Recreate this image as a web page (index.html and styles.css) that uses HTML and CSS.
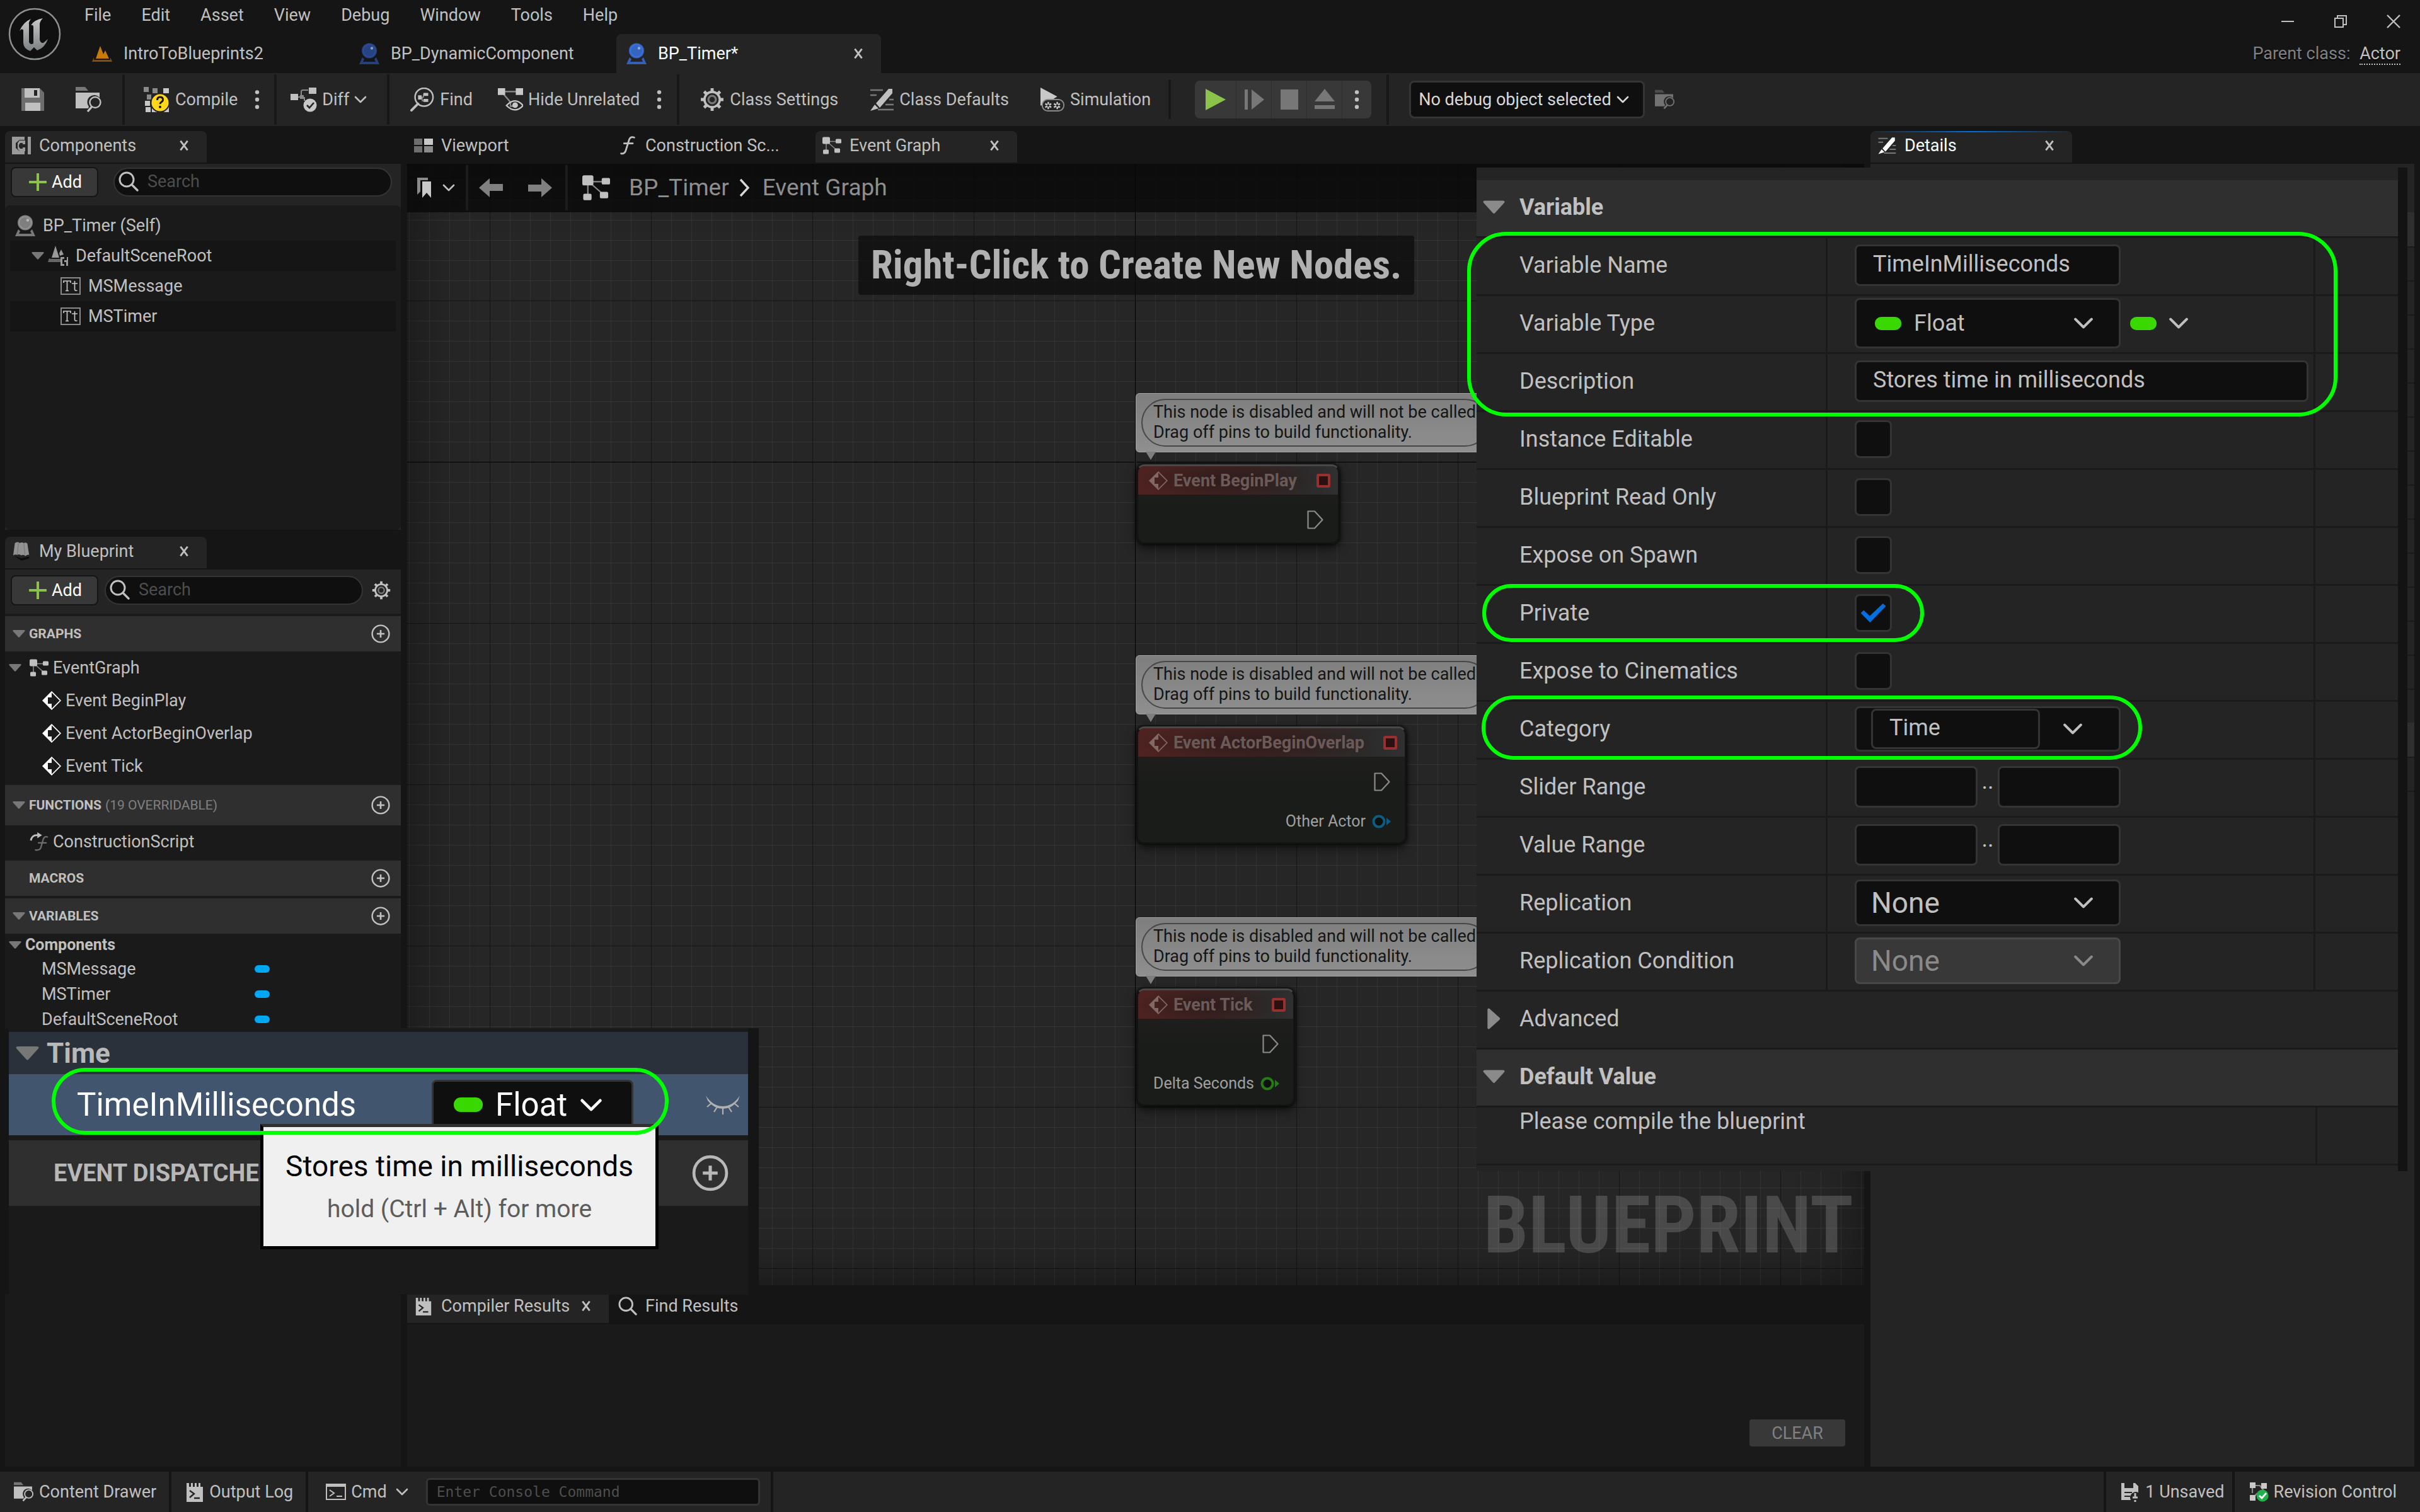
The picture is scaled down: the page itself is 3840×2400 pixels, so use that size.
FILE: index.html
```html
<!DOCTYPE html>
<html lang="en">
<head>
<meta charset="utf-8">
<title>BP_Timer - Blueprint Editor</title>
<link rel="stylesheet" href="styles.css">
</head>
<body>
<svg class="defs" aria-hidden="true">
  <defs>
    <linearGradient id="metal" x1="0" y1="0" x2="0" y2="1"><stop offset="0" stop-color="#c8c8c8"/><stop offset="1" stop-color="#7c8082"/></linearGradient>
    <symbol id="i-close" viewBox="0 0 16 16"><path d="M3 1.5l10 13M13 1.5l-10 13" stroke="currentColor" stroke-width="2.6" fill="none"/></symbol>
    <symbol id="i-chev" viewBox="0 0 20 12"><path d="M2 2l8 8 8-8" stroke="currentColor" stroke-width="2.6" fill="none" stroke-linecap="round" stroke-linejoin="round"/></symbol>
    <symbol id="i-tri" viewBox="0 0 20 12"><path d="M1.5 0h17q2 .5 .8 2L11 11.2q-1 1-2 0L.7 2Q-.5.5 1.5 0z" fill="currentColor"/></symbol>
    <symbol id="i-tri-r" viewBox="0 0 12 20"><path d="M0 1.5v17q.5 2 2 .8L11.2 11q1-1 0-2L2 .7Q.5-.5 0 1.5z" fill="currentColor"/></symbol>
    <symbol id="i-dots" viewBox="0 0 8 32"><circle cx="4" cy="5" r="3" fill="currentColor"/><circle cx="4" cy="16" r="3" fill="currentColor"/><circle cx="4" cy="27" r="3" fill="currentColor"/></symbol>
    <symbol id="i-search" viewBox="0 0 32 32"><circle cx="13" cy="13" r="11" stroke="currentColor" stroke-width="3" fill="none"/><path d="M21 21l9 9" stroke="currentColor" stroke-width="3.4" stroke-linecap="round"/></symbol>
    <symbol id="i-plus" viewBox="0 0 28 28"><path d="M14 1v26M1 14h26" stroke="#8bc34a" stroke-width="4" stroke-linecap="round"/></symbol>
    <symbol id="i-circplus" viewBox="0 0 32 32"><circle cx="16" cy="16" r="14.3" stroke="currentColor" stroke-width="2.6" fill="none"/><path d="M16 9.5v13M9.5 16h13" stroke="currentColor" stroke-width="2.8"/></symbol>
    <symbol id="i-level" viewBox="0 0 32 26"><path d="M3 19L0 26h32l-3-7v4H3z" fill="#80500a"/><path d="M6 21L13 1l5 13 3-6 6 13z" fill="#c77a06"/></symbol>
    <symbol id="i-ball" viewBox="0 0 32 34"><path d="M5 23L0 34h32l-5-11-3 3 2 4H6l2-4z" fill="currentColor" opacity=".75"/><circle cx="16" cy="12.5" r="12" fill="currentColor" opacity=".8"/><circle cx="16" cy="12.5" r="9.6" fill="none" stroke="currentColor" stroke-width="1.2"/><circle cx="20" cy="8.500" r="2.200" fill="#fff" opacity=".45"/></symbol>
    <symbol id="i-save" viewBox="0 0 36 36"><path d="M0 0h29l7 7v29H0z" fill="#6e6e6e"/><path d="M5 0h24v15H5zM6 23h24v13H6z" fill="#c0c0c0"/><path d="M20 3h5v9h-5z" fill="#242424"/></symbol>
    <symbol id="i-browse" viewBox="0 0 42 40"><path d="M0 0h15l5 6H0z" fill="#777"/><path d="M0 9h38v8a11 11 0 0 0-17 14l-1 3H0z" fill="currentColor"/><circle cx="31" cy="24.500" r="8.500" stroke="currentColor" stroke-width="2.400" fill="none"/><path d="M26 31l-7 8" stroke="currentColor" stroke-width="3.400"/></symbol>
    <symbol id="i-compile" viewBox="0 0 42 40"><path d="M0 0h8v8H0zM14 2h8v8h-8z" fill="#8a8a8a"/><path d="M5 12h7v8H5z" fill="#8a8a8a"/><path d="M31 2h9v8h-9zM2 22h8v8H2zM3 32h8v8H3zM13 32h8v8h-8zM32 32h8v8h-8z" fill="#c8c8c8"/><circle cx="26" cy="25" r="15.500" fill="#242424"/><circle cx="26" cy="25" r="13.500" fill="#ffd81a"/><path d="M21.500 21q0-5 4.500-5t4.500 4.200q0 2.300-2.500 3.800-2 1.200-2 3.200" stroke="#1a1500" stroke-width="3" fill="none"/><circle cx="26" cy="31.700" r="2" fill="#1a1500"/></symbol>
    <symbol id="i-diff" viewBox="0 0 42 40"><path d="M8 16h9V7q0-2 3-2h8M22 16v6" stroke="#8a8a8a" stroke-width="2" fill="none"/><path d="M0 11h12v10H0zM29 1h12v10H29z" fill="#c0c0c0"/><path d="M15 13h6v6h-6z" fill="#8a8a8a"/><circle cx="31" cy="29" r="10.500" fill="#c8c8c8"/><path d="M26 29l4 4 7-8" stroke="#242424" stroke-width="2.600" fill="none"/></symbol>
    <symbol id="i-find" viewBox="0 0 40 40"><circle cx="23" cy="16" r="15" stroke="currentColor" stroke-width="2.600" fill="none"/><path d="M13 27L2 38" stroke="currentColor" stroke-width="4" stroke-linecap="round"/><path d="M22 9h8v5h-8zM22 19h8v5h-8zM13 13h6v7h-6z" fill="currentColor"/><path d="M19 16h3v-5M20 16v6h3" stroke="#999" stroke-width="1.600" fill="none"/></symbol>
    <symbol id="i-hide" viewBox="0 0 38 36"><path d="M6 6h26M7 8l12 14v6h4" stroke="#8a8a8a" stroke-width="2.200" fill="none"/><path d="M0 1h11v10H0zM27 1h11v10H27z" fill="#c8c8c8"/><path d="M13 27q13-14 25 0-12 13-25 0z" fill="none" stroke="#c8c8c8" stroke-width="2.200"/><circle cx="26" cy="26.500" r="4.200" fill="#c8c8c8"/></symbol>
    <symbol id="i-gear" viewBox="0 0 36 36"><path d="M18 1v34M1 18h34M6 6l24 24M30 6L6 30" stroke="currentColor" stroke-width="4.600"/><circle cx="18" cy="18" r="11.500" fill="#242424" stroke="currentColor" stroke-width="3.400"/><circle cx="18" cy="18" r="5.600" fill="none" stroke="#777" stroke-width="3"/></symbol>
    <symbol id="i-edit" viewBox="0 0 40 36"><path d="M2 3h20M2 11h10M32 18h7M26 26h13M14 34h25" stroke="#777" stroke-width="2.600"/><path d="M31 1h6v7L17 31l-6-7zM9 26l6 6-13 4z" fill="currentColor"/></symbol>
    <symbol id="i-sim" viewBox="0 0 40 40"><path d="M0 0l28 15-8 5-8 9-12 1z" fill="#c8c8c8"/><rect x="3" y="20" width="36" height="19" rx="9" fill="#242424" stroke="#8a8a8a" stroke-width="2"/><path d="M13 24v12M8 27l10 6M8 33l10-6M28 24v12M22.500 27l10 6M22.500 33l10-6" stroke="#c8c8c8" stroke-width="2.600"/><circle cx="13" cy="30" r="2" fill="#242424"/><circle cx="28" cy="30" r="2" fill="#242424"/></symbol>
    <symbol id="i-comp" viewBox="0 0 30 28"><path d="M0 0h20v5H12L6 10v8l6 5h8v5H0zM25 0h5v28h-5z" fill="#9a9a9a"/><path d="M21 6v6h-4v-2h-4l-2 3v3l2 3h4v-2h4v6h-9l-3-4V10l3-4z" fill="#9a9a9a"/></symbol>
    <symbol id="i-view" viewBox="0 0 30 22"><path d="M0 0h13v10H0zM0 12h13v10H0z" fill="#6e6e6e"/><path d="M16 0h14v10H16z" fill="#c8c8c8"/><path d="M16 12h14v10H16z" fill="#8a8a8a"/></symbol>
    <symbol id="i-func" viewBox="0 0 22 26"><path d="M20 2q-5-2-7 3L8 21q-2 4-6 3M6 10h12" stroke="currentColor" stroke-width="2.400" fill="none" stroke-linecap="round"/></symbol>
    <symbol id="i-cscript" viewBox="0 0 30 32"><path d="M1 14Q3 4 13 5" stroke="#c0c0c0" stroke-width="3" fill="none"/><path d="M12 0l8 5-8 5z" fill="#c0c0c0"/><path d="M29 8q-5-2-7 4l-4 14q-2 5-9 4M14 18h13" stroke="#6e6e6e" stroke-width="2.400" fill="none" stroke-linecap="round"/></symbol>
    <symbol id="i-graph" viewBox="0 0 30 27"><path d="M7 7h18M6 7v16M7 7l16 14" stroke="#8a8a8a" stroke-width="1.500"/><rect width="12" height="11" rx="2" fill="currentColor"/><rect x="21" y="3" width="9" height="7" rx="1.500" fill="currentColor"/><rect x="1" y="20" width="9" height="7" rx="1.500" fill="currentColor"/><rect x="19" y="18" width="9" height="7" rx="1.500" fill="currentColor"/></symbol>
    <symbol id="i-event" viewBox="0 0 30 30"><path d="M15 1.200L28.800 15 15 28.800 1.200 15z" fill="none" stroke="currentColor" stroke-width="1.700"/><path d="M15 1v9H9v10h6v9L1 15z" fill="currentColor"/></symbol>
    <symbol id="i-scene" viewBox="0 0 32 32"><path d="M2 20l-2 6h20v-5H4z" fill="#666"/><path d="M6 19L12 0l6 19zM18 12l3-6 4 8-6 2z" fill="#999"/><path d="M20 18h6v3h-3v8h3v3h-6zM30 18h2v14h-3v-6h-3v-3h4z" fill="#999"/></symbol>
    <symbol id="i-text" viewBox="0 0 32 28"><rect x="1" y="1" width="30" height="26" fill="none" stroke="#8a8a8a" stroke-width="2"/><path d="M5 9V6h11v3M10.500 6v15M8 21.500h5M18 10h9M22.500 6v13q0 3 4 2" stroke="#c8c8c8" stroke-width="1.700" fill="none"/></symbol>
    <symbol id="i-map" viewBox="0 0 30 32"><path d="M3 24l12 4 13-3v3l-13 4z" fill="#0c0c0c"/><path d="M4 2q5-3 8 0 4-2 7 0 4-2 6 1l3 19q-3-1-6 2-4-3-7-1-4-3-7-1-4-1-7 1z" fill="#929292"/><path d="M10 2L8 22M19 2l2 20" stroke="#707070" stroke-width="1"/></symbol>
    <symbol id="i-log" viewBox="0 0 26 32"><path d="M0 2h4v6h3V2h3v6h3V2h3v6h3V2h3v6h4v24H0z" fill="currentColor"/><path d="M5 14l7 5-7 6M12 26h9" stroke="#242424" stroke-width="2.400" fill="none"/></symbol>
    <symbol id="i-cmd" viewBox="0 0 32 26"><path d="M1 1h30v24H1z" fill="none" stroke="currentColor" stroke-width="2"/><path d="M0 0h32v5H0z" fill="currentColor"/><path d="M6 10l7 5-7 5M17 20h9" stroke="currentColor" stroke-width="2" fill="none"/></symbol>
    <symbol id="i-exec" viewBox="0 0 26 30"><path d="M1.500 1.500h10.500L24.500 15 12 28.500H1.500z" fill="none" stroke="#8a8a8a" stroke-width="2.200" stroke-linejoin="round"/></symbol>
    <symbol id="i-pin" viewBox="0 0 30 22"><circle cx="11" cy="11" r="8.500" fill="#0d100d" stroke="currentColor" stroke-width="4"/><path d="M23 5l7 6-7 6z" fill="currentColor"/></symbol>
    <symbol id="i-arrow" viewBox="0 0 38 30"><path d="M0 15L17 0v9h21v11H17v10z" fill="currentColor"/></symbol>
    <symbol id="i-book" viewBox="0 0 24 32"><path d="M0 0h17v4H5v18l-5 5z" fill="#8a8a8a"/><path d="M8 6h14v26l-7-8-7 8z" fill="#c8c8c8"/></symbol>
    <symbol id="i-eye" viewBox="0 0 56 30"><path d="M1 0Q12 17 28 17T55 0l-3 8Q42 21 28 21T4 8z" fill="currentColor"/><path d="M10 12l-7 6M19 18l-5 8M28 18v12M37 18l5 8M46 12l7 6" stroke="currentColor" stroke-width="2.200"/></symbol>
    <symbol id="i-unsaved" viewBox="0 0 32 32"><path d="M2 2h22l5 5v10a9 9 0 0 0-12 12H2z" fill="#c0c0c0"/><path d="M7 2h14v8H7zM7 16h12v2H7zM7 22h9v2H7z" fill="#242424"/><path d="M24 18v8m0 3v3M20 25l8 0" stroke="#c0c0c0" stroke-width="3"/></symbol>
    <symbol id="i-rev" viewBox="0 0 32 32"><path d="M6 6h12l6 8M6 6v12M6 26l8-8" stroke="#8a8a8a" stroke-width="2.200" fill="none"/><path d="M2 1h9v9H2zM20 2h9v9h-9zM2 21h9v9H2z" fill="#c8c8c8"/><circle cx="22" cy="22" r="9.500" fill="#1fb14b"/><path d="M17 22l4 4 7-8" stroke="#fff" stroke-width="2.800" fill="none"/></symbol>
  </defs>
</svg>

<header class="titlebar">
  <svg class="logo" viewBox="0 0 84 84"><circle cx="42" cy="42" r="40" fill="#101010" stroke="#8d9092" stroke-width="2.500"/><path d="M18 37q6-14 18-19-4 5-3 9v28q2 5 7 2V31q0-4-4-3 6-9 19-11-5 5-5 10v24q1 6 6 5l7-6q-5 14-17 18l-5-5-6 6q-11-4-11-13V36q-2-4-6 1z" fill="url(#metal)"/></svg>
  <div class="title-main">
    <nav class="menu"><button>File</button><button>Edit</button><button>Asset</button><button>View</button><button>Debug</button><button>Window</button><button>Tools</button><button>Help</button></nav>
    <div class="doc-tabs">
      <div class="doc-tab"><svg class="ic32"><use href="#i-level"/></svg><span>IntroToBlueprints2</span></div>
      <div class="doc-tab"><svg class="ic32 blue-dim"><use href="#i-ball"/></svg><span>BP_DynamicComponent</span></div>
      <div class="doc-tab active"><svg class="ic32 blue"><use href="#i-ball"/></svg><span>BP_Timer*</span><button class="close" aria-label="Close tab"><svg><use href="#i-close"/></svg></button></div>
    </div>
  </div>
  <div class="title-right">
    <div class="win-btns">
      <button aria-label="Minimize"><svg viewBox="0 0 22 22"><path d="M1 11h20" stroke="#c0c0c0" stroke-width="2"/></svg></button>
      <button aria-label="Restore"><svg viewBox="0 0 22 22"><path d="M2 6h13v14H2zM6 6V2h14v14h-5" stroke="#c0c0c0" stroke-width="2" fill="none"/></svg></button>
      <button aria-label="Close"><svg viewBox="0 0 22 22"><path d="M1 1l20 20M21 1L1 21" stroke="#c0c0c0" stroke-width="2.400"/></svg></button>
    </div>
    <p class="parent">Parent class: <a href="#actor">Actor</a></p>
  </div>
</header>

<div class="toolbar">
  <div class="tgroup wide"><button aria-label="Save"><svg class="ic36"><use href="#i-save"/></svg></button><button aria-label="Browse"><svg class="ic42"><use href="#i-browse"/></svg></button></div>
  <div class="tgroup compile"><button><svg class="ic42"><use href="#i-compile"/></svg>Compile</button><button aria-label="Compile options"><svg class="dots"><use href="#i-dots"/></svg></button></div>
  <div class="tgroup diff"><button><svg class="ic42"><use href="#i-diff"/></svg>Diff<svg class="chev"><use href="#i-chev"/></svg></button></div>
  <div class="tgroup find"><button><svg class="ic40"><use href="#i-find"/></svg>Find</button><button><svg class="ic40"><use href="#i-hide"/></svg>Hide Unrelated</button><button class="more" aria-label="Hide options"><svg class="dots"><use href="#i-dots"/></svg></button></div>
  <div class="tgroup wide short"><button><svg class="ic40"><use href="#i-gear"/></svg>Class Settings</button><button><svg class="ic40"><use href="#i-edit"/></svg>Class Defaults</button><button><svg class="ic40"><use href="#i-sim"/></svg>Simulation</button></div>
  <div class="tgroup play-wrap">
    <div class="play">
      <button aria-label="Play"><svg viewBox="0 0 32 34"><path d="M0 0l32 17L0 34z" fill="#8bc34a"/></svg></button>
      <button aria-label="Step"><svg viewBox="0 0 32 34"><path d="M1 1h5v32H1zM12 1l20 16-20 16z" fill="#777"/></svg></button>
      <button aria-label="Stop"><svg viewBox="0 0 32 34"><path d="M2 1h28v32H2z" fill="#777"/></svg></button>
      <button aria-label="Eject"><svg viewBox="0 0 32 34"><path d="M16 0l16 20H0zM0 26h32v6H0z" fill="#777"/></svg></button>
      <button aria-label="Play options"><svg class="dots"><use href="#i-dots"/></svg></button>
    </div>
  </div>
  <div class="tgroup last">
    <div class="select debug"><select aria-label="Debug object"><option>No debug object selected</option></select><svg class="chev"><use href="#i-chev"/></svg></div>
    <button class="dim" aria-label="Locate debug object"><svg class="ic32"><use href="#i-browse"/></svg></button>
  </div>
</div>

<main class="main">
  <div class="left">
    <div class="tabs"><div class="tab active"><svg class="ic30"><use href="#i-comp"/></svg><span>Components</span><button class="close" aria-label="Close Components"><svg><use href="#i-close"/></svg></button></div></div>
    <section class="components">
      <div class="searchbar"><button class="add"><svg><use href="#i-plus"/></svg>Add</button><label class="search"><svg><use href="#i-search"/></svg><input type="text" placeholder="Search" aria-label="Search components"></label></div>
      <ul class="tree">
        <li class="d0"><svg class="ic32 grey"><use href="#i-ball"/></svg>BP_Timer (Self)</li>
        <li class="d1"><svg class="tri"><use href="#i-tri"/></svg><svg class="ic32"><use href="#i-scene"/></svg>DefaultSceneRoot</li>
        <li class="d2"><svg class="ic32"><use href="#i-text"/></svg>MSMessage</li>
        <li class="d2"><svg class="ic32"><use href="#i-text"/></svg>MSTimer</li>
      </ul>
    </section>
    <div class="tabs"><div class="tab active"><svg class="ic30"><use href="#i-map"/></svg><span>My Blueprint</span><button class="close" aria-label="Close My Blueprint"><svg><use href="#i-close"/></svg></button></div></div>
    <section class="myblueprint">
      <div class="searchbar tall"><button class="add"><svg><use href="#i-plus"/></svg>Add</button><label class="search"><svg><use href="#i-search"/></svg><input type="text" placeholder="Search" aria-label="Search blueprint"></label><button class="gear" aria-label="Settings"><svg class="ic30"><use href="#i-gear"/></svg></button></div>
      <h3 class="sec"><svg class="tri"><use href="#i-tri"/></svg>GRAPHS<button aria-label="Add graph"><svg class="ic30"><use href="#i-circplus"/></svg></button></h3>
      <ul class="items">
        <li class="root"><svg class="tri"><use href="#i-tri"/></svg><svg class="ic30"><use href="#i-graph"/></svg>EventGraph</li>
        <li><svg class="ic30 white"><use href="#i-event"/></svg>Event BeginPlay</li>
        <li><svg class="ic30 white"><use href="#i-event"/></svg>Event ActorBeginOverlap</li>
        <li><svg class="ic30 white"><use href="#i-event"/></svg>Event Tick</li>
      </ul>
      <h3 class="sec func"><svg class="tri"><use href="#i-tri"/></svg>FUNCTIONS <small>(19 OVERRIDABLE)</small><button aria-label="Add function"><svg class="ic30"><use href="#i-circplus"/></svg></button></h3>
      <ul class="items"><li class="script"><svg class="ic30"><use href="#i-cscript"/></svg>ConstructionScript</li></ul>
      <h3 class="sec"><span class="tri"></span>MACROS<button aria-label="Add macro"><svg class="ic30"><use href="#i-circplus"/></svg></button></h3>
      <h3 class="sec vars-head"><svg class="tri"><use href="#i-tri"/></svg>VARIABLES<button aria-label="Add variable"><svg class="ic30"><use href="#i-circplus"/></svg></button></h3>
      <h4 class="cat"><svg class="tri"><use href="#i-tri"/></svg>Components</h4>
      <ul class="vars"><li><span>MSMessage</span><i></i></li><li><span>MSTimer</span><i></i></li><li><span>DefaultSceneRoot</span><i></i></li></ul>
    </section>
  </div>

  <div class="center">
    <div class="tabs">
      <div class="tab"><svg class="ic30"><use href="#i-view"/></svg><span>Viewport</span></div>
      <div class="tab"><svg class="ic30"><use href="#i-func"/></svg><span>Construction Sc...</span></div>
      <div class="tab active"><svg class="ic30"><use href="#i-graph"/></svg><span>Event Graph</span><button class="close" aria-label="Close Event Graph"><svg><use href="#i-close"/></svg></button></div>
    </div>
    <section class="graph">
      <div class="crumbs">
        <button class="bm" aria-label="Bookmarks"><svg class="book"><use href="#i-book"/></svg><svg class="chev"><use href="#i-chev"/></svg></button>
        <div class="nav"><button aria-label="Back"><svg><use href="#i-arrow"/></svg></button><button aria-label="Forward"><svg class="flip"><use href="#i-arrow"/></svg></button></div>
        <svg class="gicon"><use href="#i-graph"/></svg>
        <a href="#bp">BP_Timer</a><svg class="sep" viewBox="0 0 20 30"><path d="M4 2l12 13L4 28" stroke="#d8d8d8" stroke-width="3.400" fill="none"/></svg><a href="#eg">Event Graph</a>
      </div>
      <p class="hint">Right-Click to Create New Nodes.</p>
      <p class="watermark">BLUEPRINT</p>

      <div class="bubble b1"><p>This node is disabled and will not be called.<br>Drag off pins to build functionality.</p></div>
      <article class="node n1"><h5><svg><use href="#i-event"/></svg>Event BeginPlay<b></b></h5><div class="exec"><svg><use href="#i-exec"/></svg></div></article>
      <div class="bubble b2"><p>This node is disabled and will not be called.<br>Drag off pins to build functionality.</p></div>
      <article class="node n2"><h5><svg><use href="#i-event"/></svg>Event ActorBeginOverlap<b></b></h5><div class="exec"><svg><use href="#i-exec"/></svg></div><div class="pin obj">Other Actor<svg><use href="#i-pin"/></svg></div></article>
      <div class="bubble b3"><p>This node is disabled and will not be called.<br>Drag off pins to build functionality.</p></div>
      <article class="node n3"><h5><svg><use href="#i-event"/></svg>Event Tick<b></b></h5><div class="exec"><svg><use href="#i-exec"/></svg></div><div class="pin flt">Delta Seconds<svg><use href="#i-pin"/></svg></div></article>
    </section>
    <div class="tabs results-tabs">
      <div class="tab active"><svg class="ic30"><use href="#i-log"/></svg><span>Compiler Results</span><button class="close" aria-label="Close Compiler Results"><svg><use href="#i-close"/></svg></button></div>
      <div class="tab"><svg class="ic30"><use href="#i-search"/></svg><span>Find Results</span></div>
    </div>
    <section class="results"><button class="clear">CLEAR</button></section>
  </div>

  <div class="right">
    <div class="tabs"><div class="tab active focus"><svg class="ic30"><use href="#i-edit"/></svg><span>Details</span><button class="close" aria-label="Close Details"><svg><use href="#i-close"/></svg></button></div></div>
    <section class="details-back"></section>
  </div>

  <aside class="details">
    <h2><svg class="tri"><use href="#i-tri"/></svg>Variable</h2>
    <div class="prop"><label for="vname">Variable Name</label><div><input class="box mid" id="vname" type="text" value="TimeInMilliseconds"></div></div>
    <div class="prop"><label for="vtype">Variable Type</label><div><div class="select mid type"><i class="pill"></i><select id="vtype"><option>Float</option></select><svg class="chev"><use href="#i-chev"/></svg></div><button class="container" aria-label="Container type"><i class="pill"></i><svg class="chev"><use href="#i-chev"/></svg></button></div></div>
    <div class="prop"><label for="vdesc">Description</label><div><input class="box" id="vdesc" type="text" value="Stores time in milliseconds"></div></div>
    <div class="prop"><label for="c1">Instance Editable</label><div><input type="checkbox" id="c1"></div></div>
    <div class="prop"><label for="c2">Blueprint Read Only</label><div><input type="checkbox" id="c2"></div></div>
    <div class="prop"><label for="c3">Expose on Spawn</label><div><input type="checkbox" id="c3"></div></div>
    <div class="prop"><label for="c4">Private</label><div><input type="checkbox" id="c4" checked></div></div>
    <div class="prop"><label for="c5">Expose to Cinematics</label><div><input type="checkbox" id="c5"></div></div>
    <div class="prop"><label for="vcat">Category</label><div><div class="combo mid"><input class="box" id="vcat" type="text" value="Time"><button aria-label="Choose category"><svg class="chev"><use href="#i-chev"/></svg></button></div></div></div>
    <div class="prop"><label for="smin">Slider Range</label><div><div class="range mid"><input class="box" id="smin" type="text"><span>..</span><input class="box" type="text" aria-label="Slider maximum"></div></div></div>
    <div class="prop"><label for="vmin">Value Range</label><div><div class="range mid"><input class="box" id="vmin" type="text"><span>..</span><input class="box" type="text" aria-label="Value maximum"></div></div></div>
    <div class="prop"><label for="rep">Replication</label><div><div class="select mid big"><select id="rep"><option>None</option></select><svg class="chev"><use href="#i-chev"/></svg></div></div></div>
    <div class="prop"><label for="repc">Replication Condition</label><div><div class="select mid big off"><select id="repc" disabled><option>None</option></select><svg class="chev"><use href="#i-chev"/></svg></div></div></div>
    <h2 class="adv"><svg class="tri-r"><use href="#i-tri-r"/></svg>Advanced</h2>
    <h2><svg class="tri"><use href="#i-tri"/></svg>Default Value</h2>
    <div class="note"><p>Please compile the blueprint</p></div>
    <div class="mark m1"></div><div class="mark m2"></div><div class="mark m3"></div>
  </aside>

  <aside class="callout">
    <h2><svg class="tri"><use href="#i-tri"/></svg>Time</h2>
    <div class="varrow"><span>TimeInMilliseconds</span><div class="select vsel"><i class="pill"></i><select aria-label="Variable type"><option>Float</option></select><svg class="chev"><use href="#i-chev"/></svg></div><button aria-label="Toggle visibility"><svg class="eye"><use href="#i-eye"/></svg></button></div>
    <h3>EVENT DISPATCHERS<button aria-label="Add dispatcher"><svg><use href="#i-circplus"/></svg></button></h3>
    <div class="tip" role="tooltip"><p>Stores time in milliseconds</p><p class="sub">hold (Ctrl + Alt) for more</p></div>
    <div class="mark m4"></div>
  </aside>
</main>

<footer class="status">
  <button><svg class="ic32"><use href="#i-browse"/></svg>Content Drawer</button>
  <button class="log"><svg class="ic26"><use href="#i-log"/></svg>Output Log</button>
  <div class="cmd"><button><svg class="ic32"><use href="#i-cmd"/></svg>Cmd<svg class="chev"><use href="#i-chev"/></svg></button><input type="text" placeholder="Enter Console Command" aria-label="Console command"></div>
  <div class="fill"></div>
  <button class="unsaved"><svg class="ic32"><use href="#i-unsaved"/></svg>1 Unsaved</button>
  <button class="rev"><svg class="ic32"><use href="#i-rev"/></svg>Revision Control</button>
</footer>
</body>
</html>
```

FILE: styles.css
```css
* { box-sizing: border-box; }
html, body { height: 100%; }
body {
  margin: 0;
  min-height: 100vh;
  display: grid;
  grid-template-rows: 116px 84px minmax(0, 1fr) 64px;
  background: #151515;
  color: #c0c0c0;
  font: 27px/32px Roboto, "Liberation Sans", sans-serif;
  overflow: hidden;
}
button, input, select { font: inherit; color: inherit; }
button { background: none; border: 0; padding: 0; display: flex; align-items: center; white-space: nowrap; }
h2, h3, h4, h5, p, ul { margin: 0; padding: 0; font-weight: 400; font-size: inherit; }
ul { list-style: none; }
svg { flex: none; display: block; }
.defs { position: absolute; width: 0; height: 0; }
.ic26 { width: 26px; height: 32px; }
.ic30 { width: 30px; height: 30px; }
.ic32 { width: 32px; height: 34px; }
.ic36 { width: 36px; height: 36px; }
.ic40 { width: 40px; height: 38px; }
.ic42 { width: 42px; height: 40px; }
.chev { width: 20px; height: 12px; }
.dots { width: 10px; height: 34px; }
.tri { width: 20px; height: 12px; color: #777; }
.blue { color: #3a76e8; }
.blue-dim { color: #2c4f9e; }
.grey { color: #999; }
.white { color: #fff; }
.close { width: 18px; height: 18px; }
.close svg { width: 18px; height: 18px; }

/* title bar */
.titlebar { display: flex; }
.logo { width: 84px; height: 84px; margin: 12px 13px 0; }
.title-main { flex: 1; }
.menu { height: 54px; display: flex; align-items: flex-start; padding: 8px 0 0; }
.menu button { padding: 0 24px; }
.doc-tabs { display: flex; gap: 4px; padding-left: 20px; }
.doc-tab { width: 420px; height: 62px; display: flex; align-items: center; gap: 18px; padding: 0 27px 0 16px; border-radius: 8px 8px 0 0; }
.doc-tab.active { background: #242424; color: #fff; }
.doc-tab .close { margin-left: auto; color: #c0c0c0; }
.title-right { padding: 23px 31px 0 0; text-align: right; }
.win-btns { display: flex; justify-content: flex-end; gap: 62px; height: 22px; }
.win-btns svg { width: 22px; height: 22px; }
.parent { margin-top: 24px; color: #808080; text-shadow: 0 2px 1px #000; }
.parent a { margin-left: 8px; color: #c0c0c0; text-decoration: none; border-bottom: 2px dotted #c0c0c0; }

/* toolbar */
.toolbar { display: flex; align-items: stretch; background: #242424; padding: 2px 0; }
.tgroup { display: flex; align-items: center; padding: 0 32px; border-right: 4px solid #181818; }
.tgroup button { gap: 8px; }
.tgroup.wide { gap: 50px; padding-left: 34px; }
.tgroup.compile { gap: 26px; padding: 0 22px 0 30px; }
.tgroup.diff { padding: 0 32px 0 22px; }
.tgroup.find { gap: 40px; padding-right: 23px; }
.find .more { margin-left: -14px; }
.tgroup.short { gap: 49px; padding: 0 28px 0 32px; border-image: linear-gradient(transparent 12%, #181818 12%, #181818 88%, transparent 88%) 1; border-width: 0 4px 0 0; }
.play-wrap { padding: 0 24px 0 38px; }
.play { display: grid; grid-template-columns: 66px repeat(3, 56px) 46px; height: 60px; background: #383838; border-radius: 8px; overflow: hidden; }
.play button { justify-content: center; border-right: 1px solid #2c2c2c; }
.play button:last-child { border: 0; }
.play svg { width: 32px; height: 34px; }
.tgroup.last { border: 0; gap: 16px; }
.dim { opacity: .5; }

.select { position: relative; display: flex; align-items: center; background: #0f0f0f; border: 3px solid #343434; border-radius: 8px; }
.select select { appearance: none; background: none; border: 0; padding: 0; flex: 1; min-width: 0; height: 100%; opacity: 1; }
.debug { width: 374px; height: 60px; padding: 0 22px 0 12px; color: #d8d8d8; }

/* main layout */
.main { position: relative; display: grid; grid-template-columns: 628px minmax(0, 1fr) 863px; gap: 10px; padding: 8px 9px 8px 8px; min-height: 0; }
.left, .center, .right { display: flex; flex-direction: column; min-width: 0; min-height: 0; }
.tabs { display: flex; gap: 4px; height: 52px; flex: none; }
.tab { width: 320px; height: 50px; display: flex; align-items: center; gap: 13px; padding: 0 27px 4px 11px; border-radius: 8px 8px 0 0; }
.tab.active { background: #242424; }
.tab .close { margin-left: auto; }
.tab.focus { color: #fff; background: linear-gradient(90deg, #242424, #0070e0 50%, #242424) 0 0 / 100% 2px no-repeat, #242424; }
.focus .close { color: #c0c0c0; }

/* components */
.components { height: 581px; margin-bottom: 11px; background: #242424; display: flex; flex-direction: column; }
.searchbar { display: flex; align-items: center; gap: 24px; height: 66px; padding: 0 14px 8px 9px; flex: none; background: #242424; }
.searchbar.tall { height: 70px; padding: 0 16px 4px 9px; gap: 10px; }
.searchbar.tall .gear { margin-left: 4px; }
.add { width: 139px; height: 48px; padding-left: 27px; gap: 8px; color: #fff; background: #383838; border: 2px solid #151515; border-radius: 8px; }
.add svg { width: 28px; height: 28px; }
.search { flex: 1; display: flex; align-items: center; gap: 14px; height: 46px; padding: 0 8px 2px 6px; background: #0f0f0f; border: 2px solid #343434; border-radius: 23px; min-width: 0; }
.search svg { width: 32px; height: 32px; }
.search input { flex: 1; min-width: 0; background: none; border: 0; outline: 0; padding: 0; }
::placeholder { color: #4d4d4d; opacity: 1; }
.tree { flex: 1; background: #1a1a1a; border-radius: 8px; padding: 8px; }
.tree li { display: flex; align-items: center; gap: 12px; height: 48px; }
.tree li:nth-child(even) { background: #151515; }
.tree .d0 { padding-left: 8px; }
.tree .d1 { padding-left: 34px; gap: 6px; }
.tree .d1 .ic32 { margin-right: 6px; }
.tree .d2 { padding-left: 80px; }

/* my blueprint */
.myblueprint { flex: 1; background: #1a1a1a; }
.sec { display: flex; align-items: center; gap: 6px; height: 56px; padding: 0 17px 0 12px; background: #2f2f2f; font-size: 21px; font-weight: 700; }
.sec button { margin-left: auto; }
.sec small { font-size: 21px; font-weight: 400; color: #808080; }
.sec.func { height: 64px; }
.searchbar.tall + .sec { margin-top: 4px; }
.vars-head { margin-top: 4px; }
.items { padding: 0 0 4px; }
.items li { display: flex; align-items: center; gap: 7px; height: 52px; padding-left: 59px; }
.items .root { padding-left: 6px; }
.items .root .ic30 { margin-left: 6px; }
.items .script { padding-left: 39px; }
.cat { display: flex; align-items: center; gap: 6px; height: 36px; padding-left: 6px; font-size: 25px; font-weight: 700; }
.vars li { display: flex; align-items: center; height: 40px; padding-left: 58px; }
.vars span { width: 338px; }
.vars i { width: 24px; height: 12px; border-radius: 6px; background: #00a8f4; }

/* graph */
.graph {
  position: relative; flex: 1; min-height: 0; overflow: hidden;
  background:
    linear-gradient(#000, #000) 1155px 0 / 1px 100% no-repeat,
    linear-gradient(#000, #000) 0 473px / 100% 1px no-repeat,
    linear-gradient(90deg, #151515 1px, transparent 1px) 131px 0 / 256px 256px,
    linear-gradient(#151515 1px, transparent 1px) 0 217px / 256px 256px,
    linear-gradient(90deg, #343434 1px, transparent 1px) 3px 0 / 32px 32px,
    linear-gradient(#343434 1px, transparent 1px) 0 25px / 32px 32px,
    #262626;
}
.graph::before { content: ""; position: absolute; inset: 0; box-shadow: inset 0 0 90px rgba(0, 0, 0, .5); }
.crumbs { position: relative; display: flex; align-items: center; height: 77px; padding-bottom: 2px; background: rgba(8, 8, 8, .78); font-size: 37px; line-height: 44px; color: #8e8e8e; }
.crumbs a { color: inherit; text-decoration: none; }
.bm { width: 97px; height: 72px; padding-left: 16px; gap: 16px; border-right: 4px solid #1c1c1c; color: #c0c0c0; }
.book { width: 24px; height: 32px; }
.nav { display: flex; gap: 40px; height: 72px; width: 158px; padding-left: 17px; border-right: 4px solid #1c1c1c; }
.nav svg { width: 38px; height: 30px; color: #808080; }
.flip { transform: rotate(180deg); }
.gicon { width: 44px; height: 40px; margin: 0 30px 0 23px; color: #c0c0c0; }
.crumbs .sep { width: 20px; height: 32px; margin: 0 19px 0 14px; }
.hint { position: absolute; left: 716px; top: 114px; padding: 0 20px; height: 94px; background: rgba(12, 12, 12, .7); border-radius: 4px; font: 700 63px/94px "Roboto Condensed", Roboto, sans-serif; color: #b0b0b0; white-space: nowrap; }
.watermark { position: absolute; right: 17px; bottom: 20px; font: 700 127px/150px "Roboto Condensed", Roboto, sans-serif; color: rgba(255, 255, 255, .17); }

.bubble { position: absolute; left: 1156px; width: 570px; height: 94px; padding: 8px; background: linear-gradient(#808080, #929292); border: 1px solid #a8a8a8; border-radius: 6px; opacity: .98; }
.bubble p { height: 76px; padding: 3px 17px; border: 2px solid #484848; border-radius: 38px; color: #151515; font-size: 27px; white-space: nowrap; }
.bubble::after { content: ""; position: absolute; left: 15px; top: 100%; border: 8px solid transparent; border-top: 13px solid #808080; border-bottom: 0; }
.node { position: absolute; left: 1158px; background: linear-gradient(#202020, #1a1c19 60%); border: 2px solid #141414; border-top: 3px solid #484848; border-radius: 12px; box-shadow: 0 8px 16px rgba(0, 0, 0, .55), 0 0 4px 2px #101010; }
.node h5 { display: flex; align-items: center; height: 45px; padding: 0 12px 0 17px; border-radius: 10px 10px 0 0; background: radial-gradient(ellipse 45% 70% at 45% 50%, rgba(30, 20, 20, .55), transparent), linear-gradient(90deg, #4e2220, #3e2423 50%, #2c2a2a 85%, #303030); color: #6b5a58; font-weight: 700; white-space: nowrap; }
.node h5 svg { width: 30px; height: 30px; margin-right: 9px; color: #806864; }
.node h5 b { width: 22px; height: 22px; margin-left: auto; background: #2a1010; border: 4px solid #983030; border-radius: 3px; }
.exec { display: flex; justify-content: flex-end; padding: 25px 23px 0 0; }
.exec svg { width: 26px; height: 30px; }
.pin { display: flex; align-items: center; justify-content: flex-end; gap: 10px; margin-top: 32px; padding-right: 22px; font-size: 25px; color: #a0a0a0; white-space: nowrap; }
.pin svg { width: 30px; height: 22px; }
.obj svg { color: #105c80; }
.flt svg { color: #277a14; }
.b1 { top: 364px; } .n1 { top: 477px; width: 321px; height: 126px; }
.b2 { top: 780px; } .n2 { top: 893px; width: 427px; height: 186px; }
.b3 { top: 1196px; } .n3 { top: 1309px; width: 250px; height: 186px; }

/* results */
.results-tabs { margin-top: 10px; }
.results { height: 226px; background: #1a1a1a; display: flex; justify-content: flex-end; align-items: flex-end; padding: 32px 30px; }
.clear { width: 152px; height: 43px; justify-content: center; background: #383838; border-radius: 4px; color: #808080; }
.details-back {
  flex: 1;
  background:
    linear-gradient(#2f2f2f, #2f2f2f) 0 77px / 100% 54px no-repeat,
    linear-gradient(#2f2f2f, #2f2f2f) 0 887px / 100% 54px no-repeat,
    repeating-linear-gradient(#1a1a1a 0 2px, transparent 2px 54px) 0 131px / 100% 866px no-repeat,
    #242424;
}

/* details overlay */
.details { position: absolute; right: 20px; top: 66px; width: 1477px; padding-top: 20px; background: #242424; border-right: 15px solid #131313; border-bottom: 9px solid #242424; font-size: 36px; line-height: 44px; }
.details::after { content: ""; position: absolute; right: -15px; bottom: -9px; width: 15px; height: 9px; background: #131313; }
.details h2 { display: flex; align-items: center; gap: 23px; height: 92px; padding: 0 0 4px 10px; background: #2f2f2f; border-bottom: 3px solid #1a1a1a; font-weight: 700; font-size: 36px; }
.details h2 .tri { width: 35px; height: 22px; color: #8a8a8a; }
.details h2.adv { background: none; font-weight: 400; padding-left: 17px; gap: 30px; }
.tri-r { width: 21px; height: 34px; color: #8a8a8a; }
.prop { display: grid; grid-template-columns: 557px minmax(0, 1fr) 131px; height: 92px; border-bottom: 3px solid #1a1a1a; }
.prop label { padding: 21px 0 0 68px; border-right: 3px solid #1a1a1a; }
.prop > div { display: flex; align-items: center; padding: 0 8px 3px 43px; border-right: 3px solid #1a1a1a; }
.box { width: 100%; height: 66px; padding: 0 26px 5px; background: #0f0f0f; border: 3px solid #343434; border-radius: 8px; }
.mid { width: 422px; }
.details .chev { width: 32px; height: 20px; }
.pill { flex: none; width: 42px; height: 21px; border-radius: 10px; background: #39d800; }
.details .select { height: 80px; padding: 0 40px 0 29px; }
.type { gap: 20px; }
.container { gap: 19px; margin-left: 15px; }
.details .select.big { height: 74px; padding-left: 23px; font-size: 46px; }
.details .off { background: #383838; border-color: #484848; color: #8a8a8a; }
.off select { color: #8a8a8a; }
.details input[type=checkbox] { appearance: none; margin: 0; width: 59px; height: 60px; background: #0f0f0f; border: 3px solid #343434; border-radius: 8px; display: grid; place-items: center; }
.details input:checked::before { content: ""; width: 40px; height: 30px; background: #0070e0; clip-path: polygon(0 50%, 12% 36%, 36% 66%, 88% 0, 100% 14%, 37% 100%); }
.combo { display: flex; align-items: center; height: 72px; padding-left: 23px; background: #0f0f0f; border: 3px solid #343434; border-radius: 8px; }
.combo .box { width: 268px; height: 64px; }
.combo button { margin-left: 36px; }
.range { display: flex; align-items: center; }
.range .box { width: 195px; }
.range span { width: 32px; text-align: center; padding-bottom: 18px; }
.note { height: 92px; border-bottom: 3px solid #1a1a1a; display: grid; grid-template-columns: minmax(0, 1fr) 128px; }
.note p { padding: 0 0 0 68px; border-right: 3px solid #1a1a1a; }

.mark { position: absolute; border: 6px solid #0f0; pointer-events: none; }
.m1 { left: -15px; top: 102px; width: 1381px; height: 293px; border-radius: 62px; }
.m2 { left: 9px; top: 661px; width: 701px; height: 92px; border-radius: 46px; }
.m3 { left: 8px; top: 838px; width: 1048px; height: 102px; border-radius: 51px; }

/* variable callout overlay */
.callout { position: absolute; left: 0; top: 1432px; width: 1204px; height: 423px; padding-top: 6px; background: #1a1a1a; border-left: 14px solid #151515; border-right: 17px solid #151515; }
.callout h2 { display: flex; align-items: center; gap: 12px; height: 67px; padding-left: 11px; background: #2b313a; font-size: 44px; font-weight: 700; color: #b8b8b8; }
.callout .tri { width: 37px; height: 24px; }
.varrow { display: flex; align-items: center; height: 97px; padding: 0 12px 0 108px; background: #41566e; font-size: 51px; line-height: 60px; color: #fff; }
.varrow > span { width: 563px; }
.vsel { width: 320px; height: 80px; padding: 0 44px 0 32px; gap: 20px; }
.vsel select { flex: none; width: 118px; }
.varrow .pill { width: 46px; height: 23px; border-radius: 11px; }
.varrow .chev { width: 36px; height: 22px; margin-left: -4px; }
.varrow > button { margin-left: auto; color: #b0b0b0; }
.eye { width: 56px; height: 30px; }
.callout h3 { display: flex; align-items: center; justify-content: space-between; height: 104px; margin-top: 8px; padding: 0 31px 0 71px; background: #2f2f2f; font-size: 38px; font-weight: 700; color: #b8b8b8; }
.callout h3 svg { width: 58px; height: 58px; }
.tip { position: absolute; left: 399px; top: 152px; width: 632px; height: 199px; padding: 28px 0 0; text-align: center; background: #f0f0f0; border: 5px solid #000; border-top-color: #303030; color: #000; font-size: 46px; line-height: 68px; }
.tip .sub { font-size: 39px; color: #5c5c5c; }
.m4 { left: 68px; top: 63px; width: 979px; height: 106px; border-radius: 53px; }

/* status bar */
.status { display: flex; gap: 4px; background: #151515; }
.status > * { background: #242424; padding: 0 20px 0 22px; }
.status button { gap: 8px; }
.status .log { gap: 10px; padding-left: 24px; }
.cmd { display: flex; align-items: center; gap: 28px; }
.status > .cmd { padding: 0 17px 0 20px; }
.cmd button { padding-left: 8px; }
.cmd button .chev { margin-left: 6px; }
.cmd input { width: 530px; height: 44px; padding: 0 14px; background: #0f0f0f; border: 3px solid #343434; border-radius: 6px; font: 23px/28px "DejaVu Sans Mono", monospace; }
.status .fill { flex: 1; }
.status .unsaved { padding-right: 12px; }
.status .rev { padding-right: 37px; }
```
